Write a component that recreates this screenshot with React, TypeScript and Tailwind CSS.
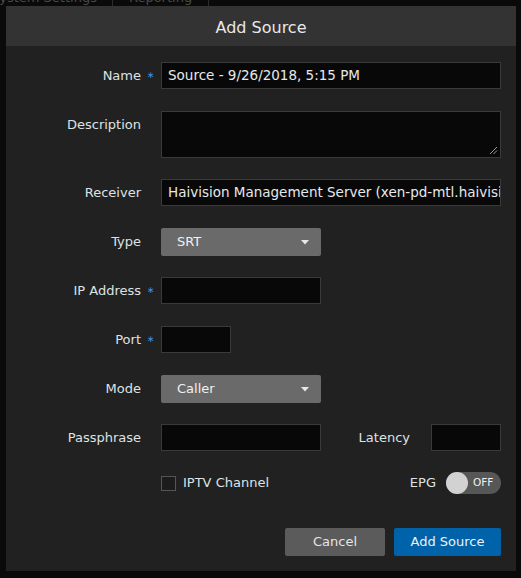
import { ReactNode } from "react";

const font = { fontFamily: '"DejaVu Sans", Verdana, sans-serif' };

function Label({ text, required }: { text: string; required?: boolean }) {
  return (
    <div className="flex h-[27px] shrink-0 items-center">
      <span className="w-[135px] text-right">{text}</span>
      <span className="w-[20px] pl-[6px] text-[9px] text-[#3d8fe0]">{required ? "∗" : ""}</span>
    </div>
  );
}

function Row({ label, required, top, className = "", children }: { label: string; required?: boolean; top?: boolean; className?: string; children: ReactNode }) {
  return (
    <div className={`flex ${top ? "items-start" : "items-center"} ${className}`}>
      <Label text={label} required={required} />
      {children}
    </div>
  );
}

function TextBox({ value, className = "" }: { value?: string; className?: string }) {
  return (
    <div className={`flex h-[27px] items-center overflow-hidden whitespace-nowrap border border-[#3a3a3a] bg-[#080808] pl-[6px] text-[13.5px] text-[#e6e8ea] ${className}`}>
      {value}
    </div>
  );
}

function Select({ value }: { value: string }) {
  return (
    <div className="flex h-[28px] w-[160px] items-center justify-between rounded-[2px] bg-[#6a6a6a] pl-[16px] pr-[12px] text-[#f0f0f0]">
      <span>{value}</span>
      <svg width="8" height="5" viewBox="0 0 8 5">
        <path d="M0 0 L8 0 L4 4.5 Z" fill="#e8e8e8" />
      </svg>
    </div>
  );
}

export default function App() {
  return (
    <div className="relative h-[578px] w-[521px] overflow-hidden bg-[#0a0a0a] text-[13px] text-[#dfe2e4]" style={font}>
      {/* page behind the dialog */}
      <div className="-mt-[9px] flex h-[15px] items-start leading-none text-[13px] text-[#4a4a4a]">
        <span className="-ml-[9px] pr-[15px]">System Settings</span>
        <span className="h-[15px] w-px bg-[#2c2c2c]" />
        <span className="px-[16px]">Reporting</span>
        <span className="h-[15px] w-px bg-[#2c2c2c]" />
      </div>

      <div className="absolute left-[6px] top-[6px] w-[510px] bg-[#212121]">
        <div className="flex h-[40px] items-center justify-center bg-[#333333] pt-[3px] text-[16px] text-[#e8e8e8]">
          Add Source
        </div>

        <div className="flex flex-col pr-[15px] pt-[16px]">
          <Row label="Name" required>
            <TextBox value="Source - 9/26/2018, 5:15 PM" className="flex-1" />
          </Row>

          <Row label="Description" top className="mt-[22px]">
            <div className="relative h-[47px] flex-1 border border-[#3a3a3a] bg-[#080808]">
              <svg className="absolute bottom-[2px] right-[2px]" width="9" height="9" viewBox="0 0 9 9">
                <path d="M1 8 L8 1 M4.5 8 L8 4.5" stroke="#9a9a9a" strokeWidth="1" />
              </svg>
            </div>
          </Row>

          <Row label="Receiver" className="mt-[21px]">
            <div className="relative flex min-w-0 flex-1">
              <TextBox value="Haivision Management Server (xen-pd-mtl.haivision.com)" className="min-w-0 flex-1 pr-[6px]" />
            </div>
          </Row>

          <Row label="Type" className="mt-[22px]">
            <Select value="SRT" />
          </Row>

          <Row label="IP Address" required className="mt-[21px]">
            <TextBox className="w-[160px]" />
          </Row>

          <Row label="Port" required className="mt-[22px]">
            <TextBox className="w-[70px]" />
          </Row>

          <Row label="Mode" className="mt-[22px]">
            <Select value="Caller" />
          </Row>

          <Row label="Passphrase" className="mt-[21px]">
            <TextBox className="w-[160px]" />
            <span className="flex-1 pr-[21px] text-right">Latency</span>
            <TextBox className="w-[70px]" />
          </Row>

          <div className="mt-[21px] flex h-[22px] items-center pl-[155px]">
            <span className="h-[15px] w-[15px] border border-[#555555] bg-[#1c1c1c]" />
            <span className="pl-[7px]">IPTV Channel</span>
            <span className="flex-1 pr-[10px] text-right">EPG</span>
            <div className="flex h-[22px] w-[55px] items-center rounded-full bg-[#575757]">
              <span className="h-[22px] w-[22px] rounded-full bg-[#d2d2d2]" />
              <span className="pl-[5px] text-[10.5px] text-[#f2f2f2]">OFF</span>
            </div>
          </div>
        </div>

        <div className="flex justify-end gap-[9px] pb-[15px] pr-[15px] pt-[34px]">
          <button className="h-[28px] w-[100px] rounded-[2px] bg-[#5b5b5b] text-[#e6e6e6]">Cancel</button>
          <button className="h-[28px] w-[107px] rounded-[2px] bg-[#0062a8] text-[#eef2f6]">Add Source</button>
        </div>
      </div>
    </div>
  );
}
